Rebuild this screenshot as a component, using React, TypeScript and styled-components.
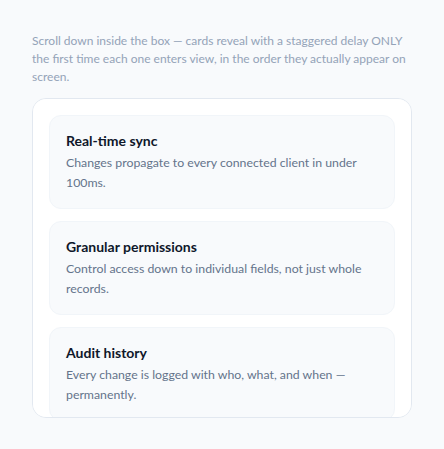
import styled, { createGlobalStyle } from "styled-components";

const GlobalStyle = createGlobalStyle`
  html, body {
    margin: 0;
    padding: 0;
    background: #f8fafc;
    font-family: Lato, "Noto Sans", sans-serif;
  }
`;

const Page = styled.div`
  padding: 32px;
`;

const Intro = styled.p`
  margin: 0 0 12px;
  font-size: 12px;
  line-height: 18px;
  color: #94a3b8;
`;

const ScrollBox = styled.div`
  box-sizing: border-box;
  height: 320px;
  overflow-y: auto;
  scrollbar-width: none;
  background: #fff;
  border: 1px solid #e2e8f0;
  border-radius: 14px;
  padding: 16px;
  display: flex;
  flex-direction: column;
  gap: 12px;
`;

const Card = styled.div`
  flex-shrink: 0;
  background: #f8fafc;
  border: 1px solid #f1f5f9;
  border-radius: 12px;
  padding: 15px 16px;
`;

const Title = styled.h3`
  margin: 0 0 2px;
  font-size: 14px;
  line-height: 20px;
  font-weight: 700;
  color: #0f172a;
`;

const Desc = styled.p`
  margin: 0;
  font-size: 12.3px;
  line-height: 20px;
  color: #64748b;
`;

const cards = [
  {
    title: "Real-time sync",
    text: "Changes propagate to every connected client in under 100ms.",
  },
  {
    title: "Granular permissions",
    text: "Control access down to individual fields, not just whole records.",
  },
  {
    title: "Audit history",
    text: "Every change is logged with who, what, and when — permanently.",
  },
];

export default function App() {
  return (
    <>
      <GlobalStyle />
      <Page>
        <Intro>
          Scroll down inside the box — cards reveal with a staggered delay ONLY
          the first time each one enters view, in the order they actually
          appear on screen.
        </Intro>
        <ScrollBox>
          {cards.map((c) => (
            <Card key={c.title}>
              <Title>{c.title}</Title>
              <Desc>{c.text}</Desc>
            </Card>
          ))}
        </ScrollBox>
      </Page>
    </>
  );
}
